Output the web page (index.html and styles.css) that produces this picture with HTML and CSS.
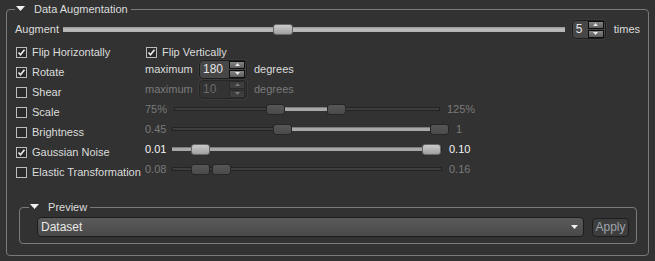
FILE: index.html
```html
<!DOCTYPE html>
<html lang="en">
<head>
  <meta charset="UTF-8">
  <title>Data Augmentation</title>
  <link rel="stylesheet" href="styles.css">
</head>
<body>
  <fieldset class="group">
    <legend class="group-title">
      <svg class="fold" width="9" height="5" viewBox="0 0 9 5"><polygon points="0,0 9,0 4.5,5"/></svg>
      <span>Data Augmentation</span>
    </legend>

    <div class="body">
      <!-- Augment count -->
      <div class="augment-row">
        <span class="augment-label">Augment</span>
        <div class="track">
          <div class="groove light"></div>
          <span class="handle light" style="left:210px"></span>
        </div>
        <div class="spin spin-small">
          <span class="val">5</span>
          <div class="btns">
            <span class="btn"><svg width="5" height="3" viewBox="0 0 5 3"><polygon points="2.5,0 5,3 0,3"/></svg></span>
            <span class="btn"><svg width="5" height="3" viewBox="0 0 5 3"><polygon points="0,0 5,0 2.5,3"/></svg></span>
          </div>
        </div>
        <span class="unit">times</span>
      </div>

      <!-- Options -->
      <div class="options">
        <div class="opt">
          <label class="check on"><span class="box"><svg width="9" height="9" viewBox="0 0 9 9"><path d="M1.5 4.5 L3.5 6.8 L7.5 1.8"/></svg></span>Flip Horizontally</label>
          <div class="ctrl">
            <label class="check on"><span class="box"><svg width="9" height="9" viewBox="0 0 9 9"><path d="M1.5 4.5 L3.5 6.8 L7.5 1.8"/></svg></span>Flip Vertically</label>
          </div>
        </div>

        <div class="opt">
          <label class="check on"><span class="box"><svg width="9" height="9" viewBox="0 0 9 9"><path d="M1.5 4.5 L3.5 6.8 L7.5 1.8"/></svg></span>Rotate</label>
          <div class="ctrl raised">
            <span class="lead lead-spin">maximum</span>
            <div class="spin spin-wide">
              <span class="val">180</span>
              <div class="btns">
                <span class="btn"><svg width="5" height="3" viewBox="0 0 5 3"><polygon points="2.5,0 5,3 0,3"/></svg></span>
                <span class="btn"><svg width="5" height="3" viewBox="0 0 5 3"><polygon points="0,0 5,0 2.5,3"/></svg></span>
              </div>
            </div>
            <span class="unit">degrees</span>
          </div>
        </div>

        <div class="opt">
          <label class="check"><span class="box"></span>Shear</label>
          <div class="ctrl raised off">
            <span class="lead lead-spin">maximum</span>
            <div class="spin spin-wide">
              <span class="val">10</span>
              <div class="btns">
                <span class="btn"><svg width="5" height="3" viewBox="0 0 5 3"><polygon points="2.5,0 5,3 0,3"/></svg></span>
                <span class="btn"><svg width="5" height="3" viewBox="0 0 5 3"><polygon points="0,0 5,0 2.5,3"/></svg></span>
              </div>
            </div>
            <span class="unit">degrees</span>
          </div>
        </div>

        <div class="opt">
          <label class="check"><span class="box"></span>Scale</label>
          <div class="ctrl raised off">
            <span class="lead lead-scale">75%</span>
            <div class="range range-scale">
              <div class="groove"></div>
              <span class="fill" style="left:110px;width:43px"></span>
              <span class="handle" style="left:92px"></span>
              <span class="handle" style="left:153px"></span>
            </div>
            <span class="max">125%</span>
          </div>
        </div>

        <div class="opt">
          <label class="check"><span class="box"></span>Brightness</label>
          <div class="ctrl raised off">
            <span class="lead">0.45</span>
            <div class="range range-bright">
              <div class="groove"></div>
              <span class="fill" style="left:120px;width:140px"></span>
              <span class="handle" style="left:101px"></span>
              <span class="handle" style="left:258px"></span>
            </div>
            <span class="max">1</span>
          </div>
        </div>

        <div class="opt">
          <label class="check on"><span class="box"><svg width="9" height="9" viewBox="0 0 9 9"><path d="M1.5 4.5 L3.5 6.8 L7.5 1.8"/></svg></span>Gaussian Noise</label>
          <div class="ctrl raised">
            <span class="lead bright">0.01</span>
            <div class="range">
              <div class="groove"></div>
              <span class="fill" style="left:0;width:252px"></span>
              <span class="handle light" style="left:19px"></span>
              <span class="handle light" style="left:250px"></span>
            </div>
            <span class="max bright">0.10</span>
          </div>
        </div>

        <div class="opt">
          <label class="check"><span class="box"></span>Elastic Transformation</label>
          <div class="ctrl raised off">
            <span class="lead">0.08</span>
            <div class="range">
              <div class="groove"></div>
              <span class="handle" style="left:19px"></span>
              <span class="handle" style="left:40px"></span>
            </div>
            <span class="max">0.16</span>
          </div>
        </div>
      </div>

      <!-- Preview -->
      <fieldset class="group preview">
        <legend class="group-title">
          <svg class="fold" width="9" height="5" viewBox="0 0 9 5"><polygon points="0,0 9,0 4.5,5"/></svg>
          <span>Preview</span>
        </legend>
        <div class="preview-row">
          <div class="combo">
            <span>Dataset</span>
            <svg width="7" height="4" viewBox="0 0 7 4"><polygon points="0,0 7,0 3.5,4"/></svg>
          </div>
          <button class="apply">Apply</button>
        </div>
      </fieldset>
    </div>
  </fieldset>
</body>
</html>
```

FILE: styles.css
```css
body {
  margin: 0;
  background: #323232;
  font-family: "Liberation Sans", Arial, sans-serif;
  font-size: 11px;
  color: #dcdcdc;
}

/* group boxes */
.group {
  margin: 3px 6px 0;
  padding: 0;
  min-width: 0;
  border: 1px solid #7a7a7a;
  border-radius: 4px;
}
.group-title {
  margin-left: 8px;
  padding: 0 3px 0 1px;
  line-height: 12px;
  white-space: nowrap;
}
.group-title .fold {
  fill: #f2f2f2;
  margin-right: 6px;
  vertical-align: 2px;
}
.body {
  padding: 4px 8px 11px 8px;
}

/* augment row */
.augment-row {
  display: flex;
  align-items: center;
  gap: 7px;
  height: 20px;
}
.augment-label {
  width: 41px;
  white-space: nowrap;
}
.track {
  flex: 1;
  position: relative;
  height: 11px;
}
.groove {
  margin-top: 3px;
  height: 4px;
  background: #3e3e3e;
  border: 1px solid #232323;
  box-sizing: border-box;
}
.groove.light {
  height: 5px;
  background: linear-gradient(#929292, #bcbcbc 40%, #b4b4b4);
  border: none;
}
.augment-row .unit {
  margin-left: 1px;
}

/* spin boxes */
.spin {
  display: flex;
  align-items: center;
  height: 19px;
  box-sizing: border-box;
  padding: 0 1px 0 3px;
  background: #474747;
  border: 1px solid #1d1d1d;
  border-radius: 4px;
  box-shadow: 0 0 0 1px #3a3a3a;
  font-size: 12px;
  color: #e4e4e4;
}
.spin-small { width: 34px; }
.spin-wide { width: 48px; }
.spin .val { flex: 1; }
.spin .btns {
  display: flex;
  flex-direction: column;
  gap: 1px;
}
.spin .btn {
  width: 14px;
  height: 6px;
  display: flex;
  align-items: center;
  justify-content: center;
  background: linear-gradient(#858585, #5c5c5c);
  border: 1px solid #0e0e0e;
}
.spin .btn svg { fill: #ededed; }

/* option rows */
.options {
  margin-top: 3px;
}
.opt {
  display: flex;
  align-items: center;
  height: 20px;
}
.check {
  width: 130px;
  display: flex;
  align-items: center;
  gap: 5px;
  white-space: nowrap;
}
.ctrl .check { width: auto; }
.box {
  width: 11px;
  height: 11px;
  margin-left: 1px;
  box-sizing: border-box;
  border: 1px solid #bdbdbd;
  background: #2a2a2a;
  display: flex;
  align-items: center;
  justify-content: center;
}
.box svg {
  fill: none;
  stroke: #f0f0f0;
  stroke-width: 1.6;
}
.ctrl {
  display: flex;
  align-items: center;
  white-space: nowrap;
}
.ctrl.raised {
  margin-bottom: 6px;
}
.lead {
  width: 27px;
}
.lead-scale { width: 29px; }
.lead-spin { width: 54px; }
.ctrl .unit { margin-left: 7px; }
.bright { color: #f4f4f4; }

.ctrl.off { color: #7a7a7a; }
.ctrl.off .spin {
  background: #333;
  border-color: #262626;
  box-shadow: 0 0 0 1px #3b3b3b;
  color: #6a6a6a;
}
.ctrl.off .spin .btn {
  background: #3e3e3e;
  border-color: #2a2a2a;
}
.ctrl.off .spin .btn svg { fill: #777; }

/* range sliders */
.range {
  position: relative;
  width: 270px;
  height: 11px;
}
.range-scale { width: 266px; }
.range-bright { width: 277px; }
.fill {
  position: absolute;
  top: 3px;
  height: 4px;
  background: #a8a8a8;
  border-top: 1px solid #7c7c7c;
  box-sizing: border-box;
}
.handle {
  position: absolute;
  top: 0;
  width: 19px;
  height: 11px;
  box-sizing: border-box;
  border-radius: 3px;
  border: 1px solid #262626;
  background: linear-gradient(#575757, #4a4a4a);
}
.handle.light {
  border-color: #686868;
  background: linear-gradient(#cacaca, #a0a0a0);
}
.track .handle {
  width: 20px;
}
.max {
  margin-left: 7px;
}

/* preview group */
.preview {
  margin: 19px 3px 0 4px;
}
.preview .group-title {
  margin-left: 9px;
}
.preview-row {
  display: flex;
  align-items: center;
  gap: 8px;
  padding: 4px 7px 6px 17px;
}
.combo {
  flex: 1;
  height: 20px;
  box-sizing: border-box;
  display: flex;
  align-items: center;
  justify-content: space-between;
  padding: 0 5px 0 3px;
  background: linear-gradient(#5a5a5a, #494949);
  border: 1px solid #1c1c1c;
  border-radius: 4px;
  font-size: 12px;
  color: #e8e8e8;
}
.combo svg { fill: #f0f0f0; }
.apply {
  width: 37px;
  height: 19px;
  padding: 0;
  font: inherit;
  font-size: 12px;
  color: #9ea4ac;
  background: #3d3d3d;
  border: 1px solid #1e1e1e;
  border-radius: 4px;
}
```
